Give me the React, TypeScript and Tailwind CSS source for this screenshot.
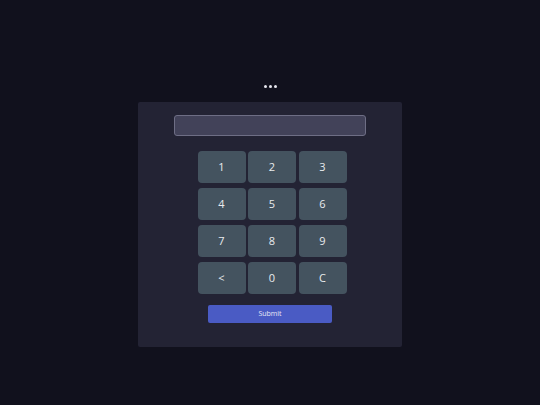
const keys = ["1", "2", "3", "4", "5", "6", "7", "8", "9", "<", "0", "C"];

export default function App() {
  return (
    <div
      className="w-full h-[405px] bg-[#11111d] flex flex-col items-center pt-[80px]"
      style={{ fontFamily: '"Open Sans", "Noto Sans", sans-serif' }}
    >
      {/* loading dots */}
      <div className="flex gap-[2px] h-[12px] items-center mb-[10px]">
        <span className="w-[3px] h-[3px] rounded-full bg-[#e6e6ee]" />
        <span className="w-[3px] h-[3px] rounded-full bg-[#e6e6ee]" />
        <span className="w-[3px] h-[3px] rounded-full bg-[#e6e6ee]" />
      </div>

      {/* card */}
      <div className="w-[264px] h-[245px] bg-[#232334] rounded-[2px] flex flex-col items-center pt-[13px]">
        <input
          className="w-[192px] h-[21px] bg-[#424259] border border-[#6e6e85] rounded-[3px] outline-none text-white text-xs px-2"
          readOnly
        />
        <div className="grid grid-cols-[48px_48px_48px] gap-x-[2.5px] gap-y-[5px] mt-[15px] ml-[4px]">
          {keys.map((k) => (
            <button
              key={k}
              className="h-[32px] bg-[#44535f] rounded-[4px] text-[#e8ebee] text-[11px] flex items-center justify-center"
            >
              {k}
            </button>
          ))}
        </div>
        <button className="w-[124px] h-[18px] bg-[#4a5bc4] rounded-[2px] text-[#e8e9f6] text-[7px] font-medium mt-[11px] flex items-center justify-center">
          Submit
        </button>
      </div>
    </div>
  );
}
